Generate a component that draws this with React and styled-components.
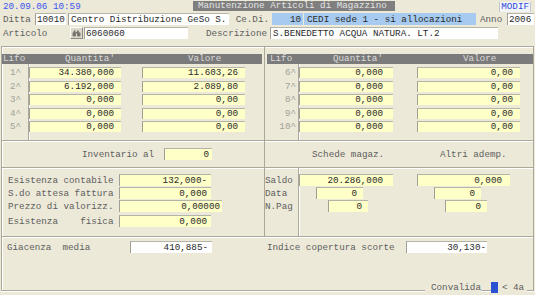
import React from 'react';
import styled, { createGlobalStyle } from 'styled-components';

const GlobalStyle = createGlobalStyle`
  html, body {
    margin: 0;
    padding: 0;
    background: #ece9d8;
  }
  body {
    font-family: "Liberation Mono", "DejaVu Sans Mono", monospace;
  }
`;

const ETCH = '#aca899';

const Screen = styled.div`
  width: 535px;
  height: 295px;
  overflow: hidden;
  background: #ece9d8;
  font-family: "Liberation Mono", "DejaVu Sans Mono", monospace;
  font-size: 9.25px;
  color: #5e5e5e;
  display: flex;
  flex-direction: column;
`;

const TopBar = styled.div`
  display: flex;
  align-items: center;
  height: 13px;
`;

const Clock = styled.div`
  width: 193px;
  padding-left: 3px;
  box-sizing: border-box;
  color: #3a55f0;
  line-height: 11px;
`;

const Title = styled.div`
  width: 202px;
  height: 10px;
  margin-top: -1px;
  padding-left: 5px;
  box-sizing: border-box;
  background: #7f7f7f;
  color: #e4e4e4;
  line-height: 10px;
`;

const Mode = styled.div`
  margin-left: auto;
  margin-right: 4px;
  padding: 0 1px;
  height: 10px;
  line-height: 10px;
  background: #f3f3fa;
  border-left: 1px solid #c4c4d4;
  border-right: 1px solid #c4c4d4;
  color: #2c4ad8;
`;

const FormRow = styled.div`
  display: flex;
  align-items: center;
  height: 12px;
  padding-left: 3px;
  margin-top: ${(p) => p.$mt || 0}px;
`;

const Label = styled.span`
  display: block;
  flex: none;
  width: ${(p) => (p.$w ? `${p.$w}px` : 'auto')};
  padding-left: ${(p) => p.$pl || 0}px;
  padding-right: ${(p) => p.$pr || 0}px;
  box-sizing: border-box;
  text-align: ${(p) => p.$align || 'left'};
  white-space: pre;
  line-height: 11px;
  color: ${(p) => p.$soft ? '#a2a29a' : '#5e5e5e'};
`;

const fieldBg = { yellow: '#ffffc8', white: '#ffffff', blue: '#a6caf0' };

const Field = styled.div`
  flex: none;
  width: ${(p) => p.$w}px;
  height: ${(p) => p.$h || 11}px;
  margin-left: ${(p) => p.$ml || 0}px;
  padding-left: ${(p) => p.$pl ?? 1}px;
  padding-right: ${(p) => p.$pr ?? 1}px;
  box-sizing: border-box;
  background: ${(p) => fieldBg[p.$bg || 'yellow']};
  border-top: 1px solid ${(p) => (p.$bg === 'blue' ? '#a6caf0' : '#b4b4a8')};
  border-left: 1px solid ${(p) => (p.$bg === 'blue' ? '#a6caf0' : '#a0a098')};
  text-align: ${(p) => p.$align || 'right'};
  color: #2a2a2a;
  line-height: ${(p) => (p.$h || 11) - 1}px;
  white-space: pre;
  overflow: hidden;
`;

const FinderButton = styled.div`
  flex: none;
  width: 13px;
  height: 12px;
  margin-left: 0;
  box-sizing: border-box;
  background: #dcd8cc;
  border: 1px solid;
  border-color: #fafaf6 #8c8a80 #8c8a80 #fafaf6;
  display: flex;
  align-items: center;
  justify-content: center;
`;

const Frame = styled.div`
  position: relative;
  margin: 7px 1px 0 1px;
  height: 245px;
  box-sizing: border-box;
  border: 1px solid ${ETCH};
  border-right-color: ${ETCH};
  box-shadow: inset 1px 1px 0 #fff, 0 1px 0 #fff;
  display: flex;
  flex-direction: column;
`;

const Section = styled.div`
  display: grid;
  grid-template-columns: 263px 1fr;
  height: ${(p) => (p.$h ? `${p.$h}px` : 'auto')};
  flex: ${(p) => (p.$h ? 'none' : '1')};
  box-sizing: border-box;
  border-bottom: ${(p) => (p.$last ? 'none' : `1px solid ${ETCH}`)};
  box-shadow: ${(p) => (p.$last ? 'none' : '0 1px 0 #fff')};
`;

const Column = styled.div`
  display: flex;
  flex-direction: ${(p) => p.$dir || 'column'};
  align-items: ${(p) => p.$items || 'stretch'};
  min-width: 0;
  box-sizing: border-box;
  padding: ${(p) => p.$pad || '0'};
  border-right: ${(p) => (p.$divider ? `1px solid ${ETCH}` : 'none')};
`;

const HeadBar = styled.div`
  display: flex;
  height: 10px;
  margin-right: ${(p) => p.$mr || 0}px;
  background: #7b7b7b;
  color: #dadada;
  line-height: 10px;
  flex: none;
`;

const HeadCell = styled.span`
  display: block;
  flex: none;
  width: ${(p) => (p.$w ? `${p.$w}px` : 'auto')};
  padding-left: ${(p) => p.$pl || 0}px;
  box-sizing: border-box;
  white-space: pre;
`;

const Grid = styled.div`
  display: flex;
  flex: 1;
`;

const LabelCol = styled.div`
  display: flex;
  flex-direction: column;
  width: ${(p) => p.$w}px;
  gap: ${(p) => p.$gap}px;
  padding-top: ${(p) => p.$pt}px;
  flex: none;
`;

const FieldCol = styled.div`
  display: flex;
  flex-direction: column;
  flex: 1;
  gap: ${(p) => p.$gap}px;
  padding-top: ${(p) => p.$pt}px;
  border-left: 1px solid ${ETCH};
  box-shadow: inset 1px 0 0 #fff;
`;

const Cell = styled.div`
  display: flex;
  align-items: center;
  height: ${(p) => p.$h}px;
  gap: ${(p) => p.$gap || 0}px;
`;

const Pair = styled.div`
  display: grid;
  grid-template-columns: 118px 1fr;
  align-items: center;
  height: ${(p) => p.$h}px;
`;

const StackRow = styled.div`
  display: flex;
  align-items: center;
  height: 12px;
  margin-top: ${(p) => p.$mt || 0}px;
`;

const Legend = styled.div`
  position: absolute;
  left: 423px;
  top: 235px;
  display: flex;
  align-items: center;
  height: 11px;
`;

const LegendText = styled.span`
  background: #ece9d8;
  padding-left: ${(p) => p.$pl}px;
  padding-right: ${(p) => p.$pr}px;
  line-height: 11px;
  color: #5e5e5e;
`;

const StatusMark = styled.span`
  display: block;
  width: 7px;
  height: 11px;
  margin-left: 10px;
  background: #2a52d2;
`;

function Binoculars() {
  return (
    <svg width="9" height="7" viewBox="0 0 9 7">
      <path d="M1 3L2 0.5h1.5V3M7.5 3L6.5 0.5H5V3" fill="#77766e" />
      <rect x="0.5" y="2.5" width="3.5" height="4" rx="1" fill="#77766e" />
      <rect x="5" y="2.5" width="3.5" height="4" rx="1" fill="#77766e" />
      <rect x="3.5" y="2" width="2" height="1.5" fill="#77766e" />
    </svg>
  );
}

const lifoLeft = [
  ['1^', '34.380,000', '11.603,26'],
  ['2^', '6.192,000', '2.089,80'],
  ['3^', '0,000', '0,00'],
  ['4^', '0,000', '0,00'],
  ['5^', '0,000', '0,00'],
];

const lifoRight = [
  ['6^', '0,000', '0,00'],
  ['7^', '0,000', '0,00'],
  ['8^', '0,000', '0,00'],
  ['9^', '0,000', '0,00'],
  ['10^', '0,000', '0,00'],
];

const ROW_H = 11;
const ROW_GAP = 2.5;

export default function App() {
  return (
    <Screen>
      <GlobalStyle />
      <TopBar>
        <Clock>20.09.06 10:59</Clock>
        <Title>Manutenzione Articoli di Magazzino</Title>
        <Mode>MODIF</Mode>
      </TopBar>

      <FormRow>
        <Label $w={32}>Ditta</Label>
        <Field $bg="white" $w={31} $h={12} $align="left">10010</Field>
        <Field $bg="white" $w={161} $h={12} $ml={2} $pl={2} $align="left">Centro Distribuzione GeSo S.</Field>
        <Label $w={43} $align="right" $pr={3}>Ce.Di.</Label>
        <Field $bg="blue" $w={31} $h={12} $pr={2}>10</Field>
        <Field $bg="blue" $w={172} $h={12} $ml={1} $pl={2} $align="left">CEDI sede 1 - si allocazioni</Field>
        <Label $w={31} $pl={4}>Anno</Label>
        <Field $bg="white" $w={27} $h={12} $align="left">2006</Field>
      </FormRow>

      <FormRow $mt={2}>
        <Label $w={67}>Articolo</Label>
        <FinderButton><Binoculars /></FinderButton>
        <Field $bg="white" $w={104} $h={12} $ml={1} $align="left">6060060</Field>
        <Label $w={82} $align="right" $pr={3}>Descrizione</Label>
        <Field $bg="white" $w={228} $h={12} $pl={2} $align="left">S.BENEDETTO ACQUA NATURA. LT.2</Field>
      </FormRow>

      <Frame>
        <Section $h={94}>
          <Column $divider $pad="7px 0 0 0">
            <HeadBar $mr={2}>
              <HeadCell $w={63} $pl={1}>Lifo</HeadCell>
              <HeadCell $w={123}>Quantita'</HeadCell>
              <HeadCell>Valore</HeadCell>
            </HeadBar>
            <Grid>
              <LabelCol $w={26} $gap={ROW_GAP} $pt={3}>
                {lifoLeft.map(([n]) => (
                  <Cell key={n} $h={ROW_H}><Label $soft $pl={8}>{n}</Label></Cell>
                ))}
              </LabelCol>
              <FieldCol $gap={ROW_GAP} $pt={3}>
                {lifoLeft.map(([n, q, v]) => (
                  <Cell key={n} $h={ROW_H} $gap={21}>
                    <Field $w={92} $pr={7}>{q}</Field>
                    <Field $w={103} $pr={7}>{v}</Field>
                  </Cell>
                ))}
              </FieldCol>
            </Grid>
          </Column>
          <Column $pad="7px 0 0 2px">
            <HeadBar>
              <HeadCell $w={66} $pl={3}>Lifo</HeadCell>
              <HeadCell $w={130}>Quantita'</HeadCell>
              <HeadCell>Valore</HeadCell>
            </HeadBar>
            <Grid>
              <LabelCol $w={31} $gap={ROW_GAP} $pt={3}>
                {lifoRight.map(([n]) => (
                  <Cell key={n} $h={ROW_H}><Label $soft $w={29} $align="right">{n}</Label></Cell>
                ))}
              </LabelCol>
              <FieldCol $gap={ROW_GAP} $pt={3}>
                {lifoRight.map(([n, q, v]) => (
                  <Cell key={n} $h={ROW_H} $gap={24}>
                    <Field $w={94} $pr={10}>{q}</Field>
                    <Field $w={103} $pr={7}>{v}</Field>
                  </Cell>
                ))}
              </FieldCol>
            </Grid>
          </Column>
        </Section>

        <Section $h={27}>
          <Column $divider $dir="row" $items="center" $pad="0 0 0 80px">
            <Label $w={82}>Inventario al</Label>
            <Field $w={48} $h={12} $pr={3}>0</Field>
          </Column>
          <Column $dir="row" $items="center" $pad="0 0 0 47px">
            <Label $w={128}>Schede magaz.</Label>
            <Label>Altri ademp.</Label>
          </Column>
        </Section>

        <Section $h={69}>
          <Column $divider $pad="6px 0 0 6px">
            <StackRow>
              <Label $w={111}>Esistenza contabile</Label>
              <Field $w={92} $h={12} $pr={4}>132,000-</Field>
            </StackRow>
            <StackRow $mt={1}>
              <Label $w={111}>S.do attesa fattura</Label>
              <Field $w={92} $h={12} $pr={4}>0,000</Field>
            </StackRow>
            <StackRow $mt={1}>
              <Label $w={111}>Prezzo di valorizz.</Label>
              <Field $w={103} $h={12} $pr={2}>0,00000</Field>
            </StackRow>
            <StackRow $mt={3}>
              <Label $w={111}>{'Esistenza    fisica'}</Label>
              <Field $w={92} $h={12} $pr={4}>0,000</Field>
            </StackRow>
          </Column>
          <Column $dir="row">
            <LabelCol $w={33} $gap={1} $pt={6}>
              <Cell $h={12}><Label>Saldo</Label></Cell>
              <Cell $h={12}><Label>Data</Label></Cell>
              <Cell $h={12}><Label>N.Pag</Label></Cell>
            </LabelCol>
            <FieldCol $gap={1} $pt={6}>
              <Pair $h={12}>
                <Field $w={94} $h={12} $pr={10}>20.286,000</Field>
                <Field $w={93} $h={12} $pr={8}>0,000</Field>
              </Pair>
              <Pair $h={12}>
                <Field $w={47} $h={12} $ml={17} $pr={6}>0</Field>
                <Field $w={47} $h={12} $ml={17} $pr={6}>0</Field>
              </Pair>
              <Pair $h={12}>
                <Field $w={40} $h={12} $ml={29} $pr={6}>0</Field>
                <Field $w={42} $h={12} $ml={28} $pr={6}>0</Field>
              </Pair>
            </FieldCol>
          </Column>
        </Section>

        <Section $last>
          <Column $dir="row" $pad="4px 0 0 5px">
            <StackRow>
              <Label $w={123}>{'Giacenza  media'}</Label>
              <Field $bg="white" $w={82} $h={12} $pr={4}>410,885-</Field>
            </StackRow>
          </Column>
          <Column $dir="row" $pad="4px 0 0 2px">
            <StackRow>
              <Label $w={139}>Indice copertura scorte</Label>
              <Field $bg="white" $w={81} $h={12} $pr={1}>30,130-</Field>
            </StackRow>
          </Column>
        </Section>

        <Legend>
          <LegendText $pl={6} $pr={0}>Convalida</LegendText>
          <StatusMark />
          <LegendText $pl={4} $pr={3}>&lt; 4a</LegendText>
        </Legend>
      </Frame>
    </Screen>
  );
}
